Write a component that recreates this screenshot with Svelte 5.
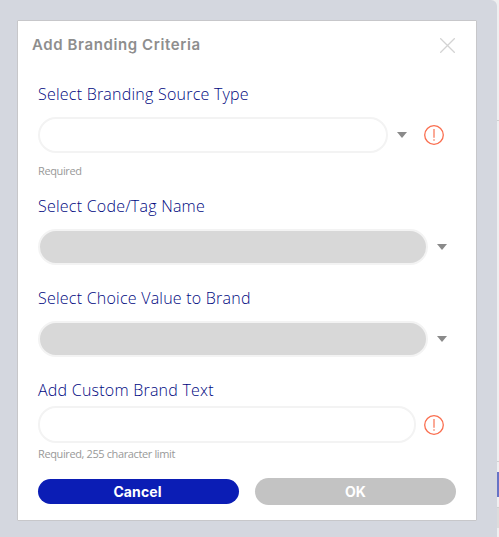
<script lang="ts">
  interface Field {
    id: string;
    label: string;
    kind: 'select' | 'text';
    disabled?: boolean;
    invalid?: boolean;
    hint?: string;
  }

  const fields: Field[] = [
    { id: 'source', label: 'Select Branding Source Type', kind: 'select', invalid: true, hint: 'Required' },
    { id: 'code', label: 'Select Code/Tag Name', kind: 'select', disabled: true },
    { id: 'choice', label: 'Select Choice Value to Brand', kind: 'select', disabled: true },
    { id: 'text', label: 'Add Custom Brand Text', kind: 'text', invalid: true, hint: 'Required, 255 character limit' },
  ];
</script>

<div class="page">
  <div class="overlay">
    <div class="dialog" role="dialog" aria-labelledby="dialog-title">
      <header>
        <h2 id="dialog-title">Add Branding Criteria</h2>
        <button class="close" aria-label="Close">
          <svg width="15" height="15" viewBox="0 0 15 15">
            <path d="M.2.2l14.6 14.6M14.8.2L.2 14.8" />
          </svg>
        </button>
      </header>

      <form>
        {#each fields as field}
          <div class="field {field.kind}">
            <label for={field.id}>{field.label}</label>
            <div class="row">
              <input id={field.id} type="text" disabled={field.disabled} readonly={field.kind === 'select'} />
              {#if field.kind === 'select'}
                <svg class="arrow" width="10" height="6" viewBox="0 0 10 6">
                  <path d="M0 0h10L5 6z" />
                </svg>
              {/if}
              {#if field.invalid}
                <svg class="alert" width="20" height="20" viewBox="0 0 20 20">
                  <circle cx="10" cy="10" r="9.3" />
                  <path d="M10 4v8.8M10 14.2v1.5" />
                </svg>
              {/if}
            </div>
            {#if field.hint}
              <span class="hint">{field.hint}</span>
            {/if}
          </div>
        {/each}
      </form>

      <footer>
        <button class="btn cancel">Cancel</button>
        <button class="btn ok" disabled>OK</button>
      </footer>
    </div>
  </div>

  <!-- edge of the page behind the overlay -->
  <div class="behind">
    <div class="panel top"></div>
    <div class="panel middle"></div>
    <div class="panel actions"><div class="action"></div></div>
    <div class="panel gap"></div>
    <div class="panel rest"></div>
  </div>
</div>

<style>
  :global(body) { background: #efeff0; overflow: hidden; }

  .page {
    display: flex;
    height: 537px;
    font-family: 'Open Sans', 'Noto Sans', sans-serif;
  }

  .overlay {
    box-sizing: border-box;
    width: 497px;
    padding: 20px 20px 16px 17px;
    background: #d4d7df;
    border-top-right-radius: 6px;
    flex-shrink: 0;
  }

  /* Dialog */
  .dialog {
    box-sizing: border-box;
    height: 501px;
    padding: 14px 20px 15px;
    background: #fff;
    border: 1px solid #c7c7ca;
    border-radius: 1px;
    display: flex;
    flex-direction: column;
  }

  header {
    display: flex;
    justify-content: space-between;
    align-items: center;
    height: 20px;
    margin: 0 1px 0 -6px;
  }
  h2 {
    margin: 0;
    font: 600 15px/20px Inter, sans-serif;
    letter-spacing: 0.6px;
    color: #8e8e8e;
  }
  .close {
    display: flex;
    padding: 0;
    background: none;
    border: none;
    cursor: pointer;
  }
  .close path { stroke: #d3d3d3; stroke-width: 1.3; fill: none; }

  /* Fields */
  form {
    display: flex;
    flex-direction: column;
    padding-top: 28px;
  }
  .field {
    display: flex;
    flex-direction: column;
    margin-bottom: 22px;
  }
  .field:first-child { margin-bottom: 17px; }
  .field.text { margin-bottom: 0; }

  label {
    font-size: 16px;
    font-weight: 300;
    letter-spacing: 0.23px;
    line-height: 22px;
    color: #00087f;
  }
  .row {
    display: flex;
    align-items: center;
    margin-top: 12px;
    padding-right: 9px;
  }
  .text .row { margin-top: 5px; padding-right: 12px; }
  .row:has(.alert) { padding-right: 12px; }

  input {
    box-sizing: border-box;
    flex: 1;
    min-width: 0;
    height: 36px;
    padding: 0 16px;
    font: inherit;
    background: #fff;
    border: 2px solid #f3f3f3;
    border-radius: 18px;
    outline: none;
  }
  input:disabled { background: #d8d8d8; }
  .text input { height: 37px; }

  .arrow { margin-left: 9px; fill: #8a8a8a; }
  .alert { margin-left: 17px; }
  .text .alert { margin-left: 8px; }
  .alert circle { fill: none; stroke: #fa6e4f; stroke-width: 1.3; }
  .alert path { fill: none; stroke: #fa8d74; stroke-width: 1.5; }

  .hint {
    margin-top: 10px;
    font-size: 11px;
    line-height: 15px;
    letter-spacing: -0.38px;
    color: #999;
  }
  .text .hint { margin-top: 3px; }

  /* Buttons */
  footer {
    display: flex;
    align-items: center;
    gap: 16px;
    margin-top: auto;
  }
  .btn {
    width: 201px;
    height: 27px;
    padding: 0;
    border: none;
    border-radius: 14px;
    font: 700 14px/20px Inter, sans-serif;
    letter-spacing: 0.1px;
    color: #fff;
  }
  .cancel { height: 25px; padding-right: 2px; background: #0b1db5; cursor: pointer; }
  .ok { background: #c3c3c3; }

  /* Strip on the right */
  .behind {
    display: flex;
    flex-direction: column;
    flex: 1;
  }
  .panel { box-sizing: border-box; border-bottom: 1px solid #d0d0d0; }
  .top { height: 121px; }
  .middle { height: 341px; }
  .actions { height: 46px; padding-top: 10px; }
  .action { height: 25px; background: #6773c6; }
  .gap { height: 20px; background: #dcdcdc; border: none; }
  .rest { flex: 1; border: none; }
</style>
